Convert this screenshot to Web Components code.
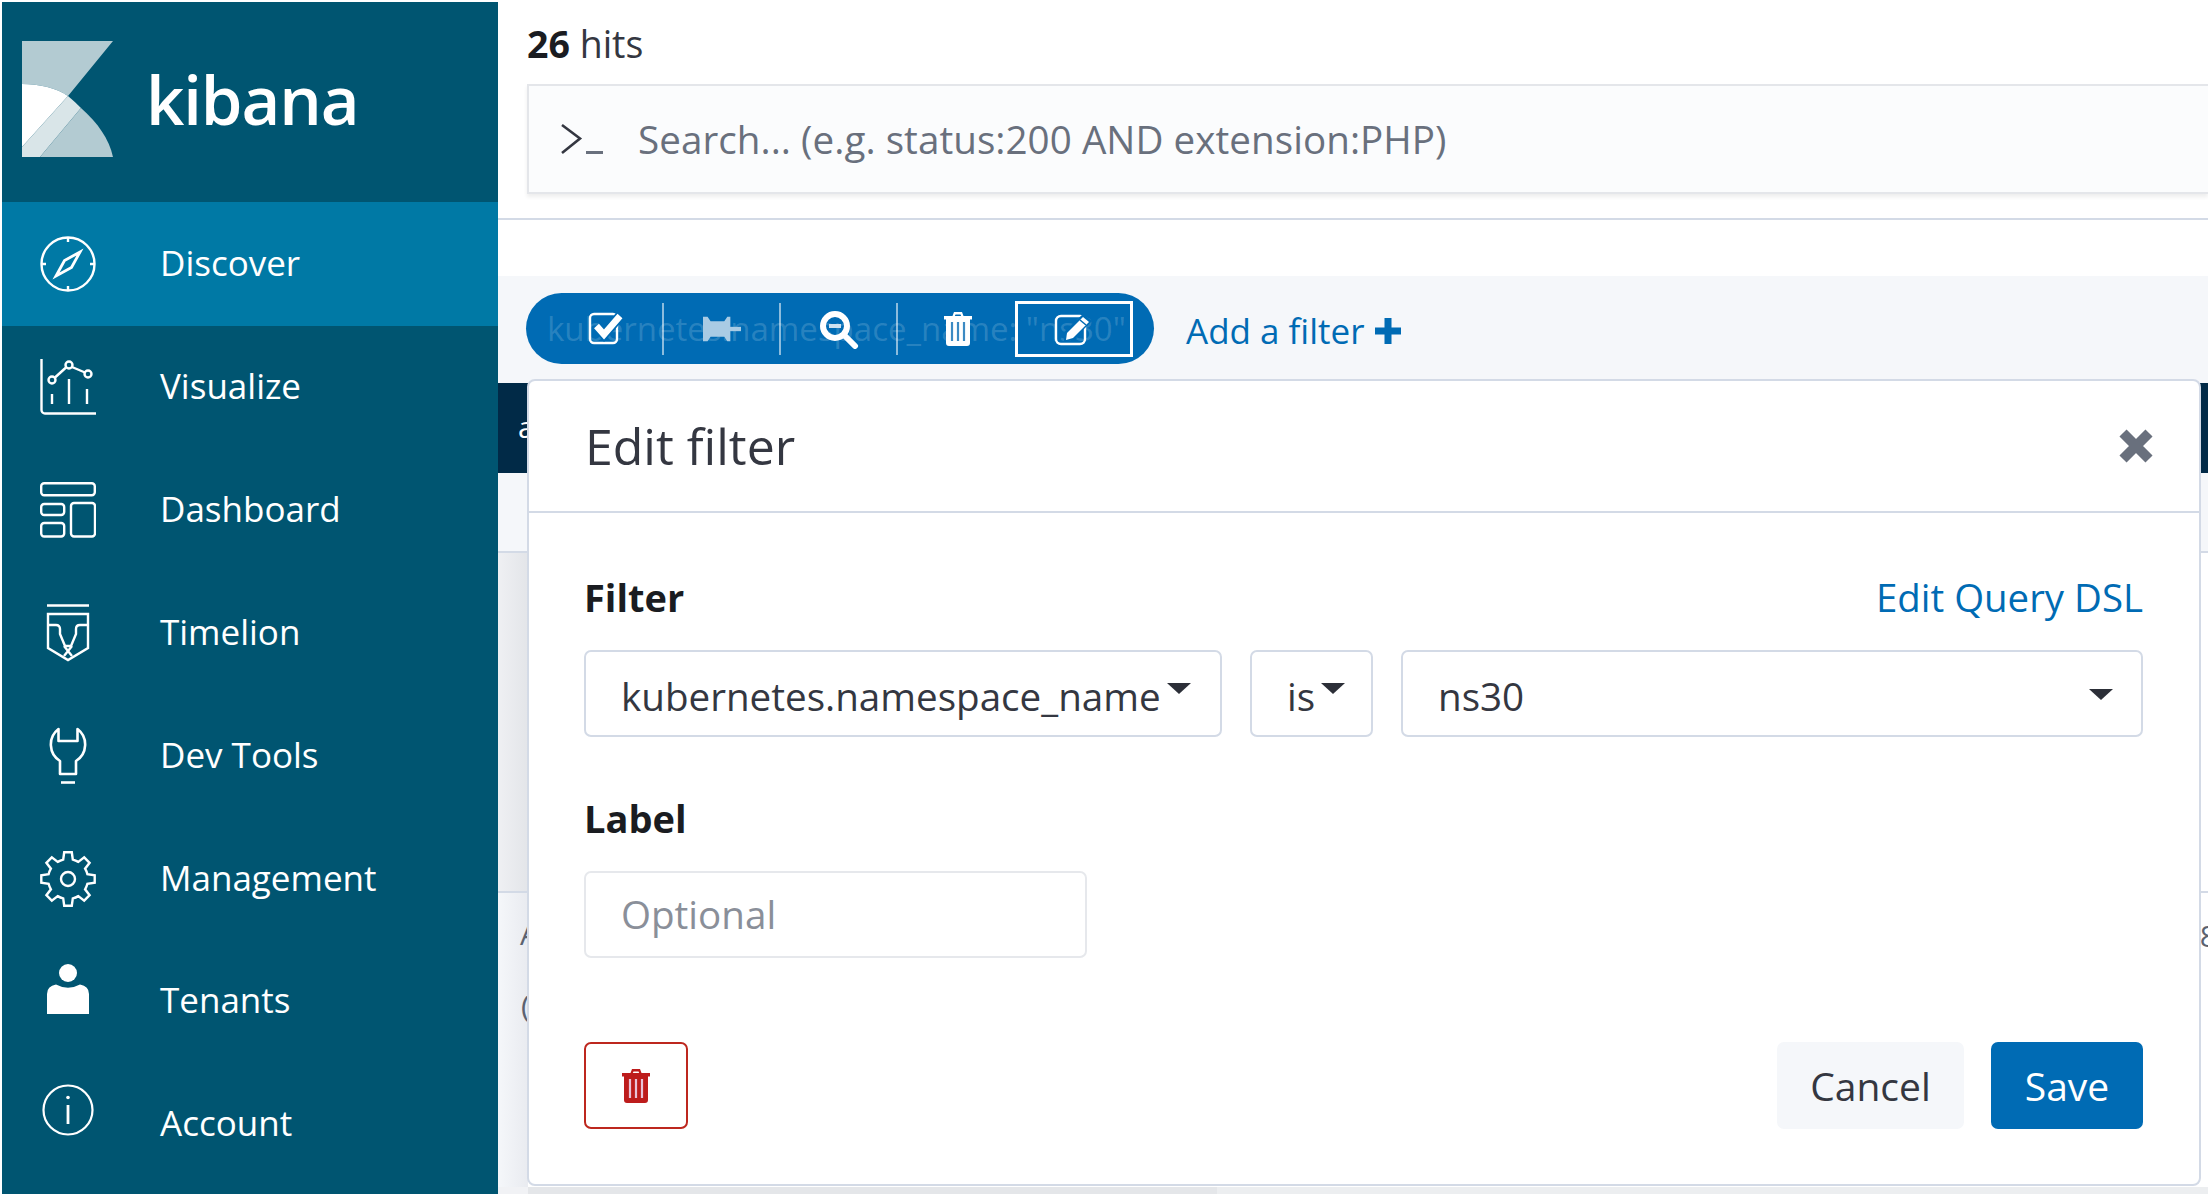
<!DOCTYPE html>
<html lang="en"><head><meta charset="utf-8"><title>Kibana</title>
<style>
html,body{margin:0;padding:0;height:1194px;overflow:hidden;background:#fff}
body{display:flex;font-family:"Open Sans","Noto Sans",sans-serif;color:#343741}
</style></head><body>
<kb-nav>
  <kb-nav-item icon="compass" active>Discover</kb-nav-item>
  <kb-nav-item icon="visualize">Visualize</kb-nav-item>
  <kb-nav-item icon="dashboard">Dashboard</kb-nav-item>
  <kb-nav-item icon="timelion">Timelion</kb-nav-item>
  <kb-nav-item icon="wrench">Dev Tools</kb-nav-item>
  <kb-nav-item icon="gear">Management</kb-nav-item>
  <kb-nav-item icon="tenant" shift="-12">Tenants</kb-nav-item>
  <kb-nav-item icon="info" shift="-14">Account</kb-nav-item>
</kb-nav>
<kb-main>
  <kb-filter-pill slot="pill">kubernetes.namespace_name: "ns30"</kb-filter-pill>
  <kb-modal slot="modal"></kb-modal>
</kb-main>
<script>
const gearPath=(()=>{let d='';const c=28,n=8,R=27,r=20;for(let i=0;i<n;i++){const a=i*2*Math.PI/n-Math.PI/2,s=Math.PI/n;
const p=(rad,ang)=>(c+rad*Math.cos(ang)).toFixed(1)+' '+(c+rad*Math.sin(ang)).toFixed(1);
d+=(i?'L':'M')+p(r,a-s*.62)+'L'+p(R,a-s*.36)+'L'+p(R,a+s*.36)+'L'+p(r,a+s*.62)+'A'+r+' '+r+' 0 0 1 '+p(r,a+s*1.38);}
return d+'Z';})();
const ICONS={
compass:`<svg width="56" height="56" viewBox="0 0 56 56" fill="none" stroke="#fff" stroke-width="2.4"><circle cx="28" cy="28" r="26.5"/><path d="M28 1.5V6M28 50v4.500M1.500 28H6M50 28h4.500"/><path d="M40 16L31.500 31.500 16 40 24.500 24.500Z" stroke-width="2.800"/></svg>`,
visualize:`<svg width="56" height="56" viewBox="0 0 56 56" fill="none" stroke="#fff" stroke-width="2.400"><path d="M1.500 0V51a3.500 3.500 0 0 0 3.500 3.500H56"/><circle cx="12" cy="21" r="3.500"/><circle cx="29" cy="6" r="3.500"/><circle cx="48" cy="15" r="3.500"/><path d="M15 18.500L26 8.500M32 8L45 13.500M29 20V45M47 30V45M12 35V45"/></svg>`,
dashboard:`<svg width="56" height="56" viewBox="0 0 56 56" fill="none" stroke="#fff" stroke-width="2.400"><rect x="1.200" y="1.200" width="53.600" height="12" rx="3"/><rect x="1.200" y="22" width="23" height="11" rx="3"/><rect x="1.200" y="41" width="23" height="13.500" rx="3"/><rect x="31" y="21" width="24" height="33.500" rx="3"/></svg>`,
timelion:`<svg width="44" height="58" viewBox="0 0 44 58" fill="none" stroke="#fff" stroke-width="2.400"><path d="M1 1.500H43M2 10H42V44L22 56 2 44Z"/><path d="M2 21H10Q14 21 14 25V30L19 42 25 42 30 30V25Q30 21 34 21H42"/><path d="M18 42L26 52M26 42L18 52"/></svg>`,
wrench:`<svg width="42" height="58" viewBox="0 0 42 58" fill="none" stroke="#fff" stroke-width="2.600" stroke-linejoin="round"><path d="M11.500 2A19.500 19.500 0 0 0 13 34V47H29V34A19.500 19.500 0 0 0 30.500 2V14H11.500Z"/><path d="M14 55.500H28"/></svg>`,
gear:`<svg width="56" height="56" viewBox="0 0 56 56" fill="none" stroke="#fff" stroke-width="2.400"><path d="${gearPath}"/><circle cx="28" cy="28" r="7"/></svg>`,
tenant:`<svg width="42" height="52" viewBox="0 0 42 52" fill="#fff"><circle cx="21" cy="10" r="9"/><path d="M0 51V31Q0 23 9 21.500Q21 28 33 21.500Q42 23 42 31V51Z"/></svg>`,
info:`<svg width="52" height="52" viewBox="0 0 52 52" fill="none" stroke="#fff" stroke-width="2.200"><circle cx="26" cy="26" r="24.500"/><path d="M26 21V40" stroke-width="2.800"/><circle cx="26" cy="13.500" r="1.800" fill="#fff" stroke="none"/></svg>`,
check:`<svg width="40" height="36" viewBox="0 0 40 36" fill="none"><rect x="3" y="3" width="27" height="29" rx="4" stroke="#fff" stroke-width="2.400"/><path d="M9.500 15L17 23.500 33 5" stroke="#006bb4" stroke-width="10"/><path d="M9.500 15L17 23.500 33 5" stroke="#fff" stroke-width="6.500"/></svg>`,
pin:`<svg width="38" height="26" viewBox="0 0 50 30" preserveAspectRatio="none" fill="#a9cbe4"><path d="M0 1h6l4 5h18l4-5h4v28h-4l-4-5H10l-4 5H0z"/><rect x="34" y="12.500" width="16" height="5"/></svg>`,
zoomout:`<svg width="40" height="40" viewBox="0 0 40 40" fill="none" stroke="#fff"><circle cx="16" cy="17" r="12" stroke-width="6"/><path d="M25 26L36 37" stroke-width="6" stroke-linecap="round"/><path d="M10 17H22" stroke="#cfe2f0" stroke-width="4"/></svg>`,
trash:`<svg width="30" height="36" viewBox="0 0 30 36"><path fill="currentColor" d="M1 5H9.500L11 1H19L20.500 5H29V8.500H27V32Q27 35 24 35H6Q3 35 3 32V8.500H1ZM12.500 3.500L11.800 5H18.200L17.500 3.500Z"/><path d="M9 11V30M15 11V30M21 11V30" stroke="var(--stripe,#3c8ac3)" stroke-width="2.200"/></svg>`,
edit:`<svg width="42" height="36" viewBox="0 0 42 36" fill="none"><rect x="3" y="5" width="29" height="28" rx="5" stroke="#fff" stroke-width="2.400"/><path d="M11 21L30 3 39 10 20 29 11 31Z" fill="#006bb4"/><path d="M14 22L30 6 36 11 20 27 13 29Z" fill="#fff"/><path d="M27 9L33 14" stroke="#006bb4" stroke-width="1.500"/></svg>`
};
class KbIcon extends HTMLElement{
  connectedCallback(){if(this.shadowRoot)return;const s=this.attachShadow({mode:'open'});
    s.innerHTML=`<style>:host{display:inline-flex;align-items:center;justify-content:center;flex:none}svg{display:block}</style>${ICONS[this.getAttribute('name')]||''}`;}
}
customElements.define('kb-icon',KbIcon);

class KbNav extends HTMLElement{
  constructor(){super();this.attachShadow({mode:'open'}).innerHTML=`<style>
  :host{display:flex;flex-direction:column;width:496px;height:1192px;margin:2px 0 0 2px;background:#005571;flex:none;color:#fff}
  header{height:200px;display:flex;align-items:center;flex:none;box-sizing:border-box;padding:0 0 0 20px}
  .mark{display:block;margin-top:-6px}
  .word{font:600 67px/1 "Open Sans",sans-serif;letter-spacing:-1.100px;margin:-6px 0 0 32px}
  </style>
  <header><svg class="mark" width="92" height="116" viewBox="0 0 92 116">
    <path fill="#b3cbd2" d="M0 0H91L46 55C35 47 17 43 0 43Z"/>
    <path fill="#fff" d="M0 43C17 43 35 47 46 55L0 106Z"/>
    <path fill="#d9e5e8" d="M0 106L46 55Q52 60 59 67L18 116H0Z"/>
    <path fill="#b3cbd2" d="M18 116L59 67C76 82 87 98 91 116Z"/>
  </svg><span class="word">kibana</span></header><slot></slot>`;}
}
customElements.define('kb-nav',KbNav);

class KbNavItem extends HTMLElement{
  connectedCallback(){if(this.shadowRoot)return;const s=this.attachShadow({mode:'open'});
    const shift=this.getAttribute('shift')||0;
    s.innerHTML=`<style>
    :host{display:flex;align-items:center;height:122.800px;flex:none;font:400 35px/1 "Open Sans",sans-serif;color:#fff}
    :host([active]){background:#0079a5;height:124px}
    .i{width:56px;height:56px;margin-left:38px;display:flex;align-items:center;justify-content:center;transform:translateY(${shift}px)}
    .t{margin-left:64px;margin-top:-3px}
    </style><div class="i"><kb-icon name="${this.getAttribute('icon')}"></kb-icon></div><span class="t"><slot></slot></span>`;}
}
customElements.define('kb-nav-item',KbNavItem);

class KbSearch extends HTMLElement{
  constructor(){super();this.attachShadow({mode:'open'}).innerHTML=`<style>
  :host{display:flex;align-items:center;height:110px;box-sizing:border-box;margin-left:29px;background:#fbfcfd;border:2px solid #e4e6ea;border-right:0;box-shadow:0 3px 4px rgba(0,0,0,.07);flex:none}
  svg{margin-left:31px;flex:none}
  span{margin-left:34px;font:400 38.600px/1 "Open Sans",sans-serif;letter-spacing:.05px;color:#69707d}
  </style><svg width="44" height="32" viewBox="0 0 44 32" fill="none"><path d="M2 2L20 15.500 2 30" stroke="#343741" stroke-width="2.600"/><path d="M26 29.500H43" stroke="#69707d" stroke-width="3"/></svg><span>Search... (e.g. status:200 AND extension:PHP)</span>`;}
}
customElements.define('kb-search',KbSearch);

class KbFilterPill extends HTMLElement{
  constructor(){super();this.attachShadow({mode:'open'}).innerHTML=`<style>
  :host{display:block;position:relative;width:628px;height:71px;flex:none;background:#006bb4;border-radius:36px;overflow:hidden}
  .label{position:absolute;left:21px;top:0;font:400 33px/71px "Open Sans",sans-serif;color:rgba(255,255,255,.17);white-space:nowrap}
  .acts{position:absolute;inset:0;display:grid;grid-template-columns:138px 117px 117px 117px 139px;align-items:center}
  .acts>div{display:flex;align-items:center;justify-content:center;height:52px;border-right:2px solid rgba(255,255,255,.55);box-sizing:border-box;color:#fff}
  .acts>div:nth-child(4){border-right:0}
  .acts>div.edit:nth-child(5){width:118px;height:56px;border:3px solid #fff;box-sizing:border-box}
  kb-icon[name=check]{margin-left:26px}
  kb-icon[name=trash]{margin-left:3px}
  </style><div class="label"><slot></slot></div>
  <div class="acts"><div><kb-icon name="check"></kb-icon></div><div><kb-icon name="pin"></kb-icon></div><div><kb-icon name="zoomout"></kb-icon></div><div><kb-icon name="trash"></kb-icon></div><div class="edit"><kb-icon name="edit"></kb-icon></div></div>`;}
}
customElements.define('kb-filter-pill',KbFilterPill);

class KbSelect extends HTMLElement{
  connectedCallback(){if(this.shadowRoot)return;const s=this.attachShadow({mode:'open'});
    const near=this.hasAttribute('near');
    s.innerHTML=`<style>
    :host{display:flex;align-items:center;height:87px;box-sizing:border-box;border:2px solid #d3dae6;border-radius:7px;background:#fff;padding:6px 0 0 35px;font:400 38.600px/1 "Open Sans",sans-serif;color:#343741;position:relative}
    :host([placeholder]){border-color:#e6e8ec;color:#8a8f99;padding-top:0}
    .c{width:0;height:0;border-left:12px solid transparent;border-right:12px solid transparent;border-top:11px solid #2c2f38;flex:none}
    .c.near{margin:-17px 0 0 6px}
    .c.far{position:absolute;right:28px;top:37px}
    </style><slot></slot>${this.hasAttribute('nocaret')?'':`<i class="c ${near?'near':'far'}"></i>`}`;}
}
customElements.define('kb-select',KbSelect);

class KbButton extends HTMLElement{
  constructor(){super();this.attachShadow({mode:'open'}).innerHTML=`<style>
  :host{display:flex;align-items:center;justify-content:center;height:87px;box-sizing:border-box;border-radius:7px;font:400 39px/1 "Open Sans",sans-serif;flex:none}
  :host([kind=danger]){width:104px;border:2px solid #bd271e;color:#bd1c1c;--stripe:#e9c3d8}
  :host([kind=ghost]){width:187px;background:#f5f7fa;color:#343741}
  :host([kind=primary]){width:152px;background:#006bb4;color:#fff}
  </style><slot></slot>`;}
}
customElements.define('kb-button',KbButton);

class KbModal extends HTMLElement{
  constructor(){super();this.attachShadow({mode:'open'}).innerHTML=`<style>
  :host{display:flex;flex-direction:column;position:absolute;left:29px;top:379px;width:1674px;height:807px;box-sizing:border-box;background:#fff;border:2px solid #d3dae6;border-radius:8px;z-index:2}
  header{height:132px;flex:none;box-sizing:border-box;border-bottom:2px solid #d3dae6;display:flex;align-items:center;justify-content:space-between;padding:0 45px 0 56px}
  h2{margin:0;font:400 50px/1 "Open Sans",sans-serif;color:#343741}
  .body{padding:0 56px 0 55px;display:flex;flex-direction:column;flex:1;font-family:"Open Sans",sans-serif}
  .lab{display:flex;justify-content:space-between;align-items:center;height:60px;font:700 38px/1 "Open Sans",sans-serif;color:#1a1c21}
  .lab a{font:400 38.400px/1 "Open Sans",sans-serif;color:#006bb4}
  .l1{margin-top:54px}
  .row{display:grid;grid-template-columns:638px 123px 1fr;gap:28px;margin-top:23px}
  .l2{margin-top:51px}
  .opt{width:503px;margin-top:23px}
  .foot{display:flex;align-items:center;margin-top:84px;gap:27px}
  .sp{flex:1}
  </style>
  <header><h2>Edit filter</h2><svg width="36" height="36" viewBox="0 0 36 36"><path d="M5 5L31 31M31 5L5 31" stroke="#69707d" stroke-width="10"/></svg></header>
  <div class="body">
    <div class="lab l1"><span>Filter</span><a>Edit Query DSL</a></div>
    <div class="row"><kb-select near>kubernetes.namespace_name</kb-select><kb-select near>is</kb-select><kb-select>ns30</kb-select></div>
    <div class="lab l2"><span>Label</span></div>
    <kb-select class="opt" placeholder nocaret>Optional</kb-select>
    <div class="foot"><kb-button kind="danger"><kb-icon name="trash"></kb-icon></kb-button><span class="sp"></span><kb-button kind="ghost">Cancel</kb-button><kb-button kind="primary">Save</kb-button></div>
  </div>`;}
}
customElements.define('kb-modal',KbModal);

class KbMain extends HTMLElement{
  constructor(){super();this.attachShadow({mode:'open'}).innerHTML=`<style>
  :host{display:flex;flex-direction:column;flex:1;min-width:0;height:1194px;position:relative;overflow:hidden;box-sizing:border-box;background:#fff}
  .hits{height:84px;flex:none;box-sizing:border-box;padding:26px 0 0 29px;font:400 37.500px/36px "Open Sans",sans-serif;color:#343741}
  .hits b{font-weight:700;color:#1a1c21}
  .gap1{height:24px;flex:none;border-bottom:2px solid #d3dae6}
  .gap2{height:56px;flex:none}
  .band{height:107px;flex:none;box-sizing:border-box;background:#f5f7fa;display:flex;padding:17px 0 0 28px}
  .add{margin:2px 0 0 32px;height:71px;display:flex;align-items:center;font:400 35px/1 "Open Sans",sans-serif;color:#006bb4}
  .add svg{margin-left:10px}
  .dark{height:90px;flex:none;background:#012a47;color:#fff;font:400 30px/88px "Open Sans",sans-serif;padding-left:20px}
  .tab{height:80px;flex:none;background:#f5f7fa;border-bottom:2px solid #d3dae6;box-sizing:border-box}
  .chart{height:340px;flex:none;background:linear-gradient(90deg,#eff0f3,#e3e5e9 30px,#fff 30px);border-bottom:2px solid #d3dae6;box-sizing:border-box;position:relative}
  .rows{flex:1;position:relative;background:linear-gradient(90deg,#f5f7fa,#e9ebf0 30px,#fff 30px)}
  .frag{position:absolute;font:400 30px/1 "Open Sans",sans-serif;color:#5b6270}
  .floor{position:absolute;left:0;right:0;top:1187px;height:7px;background:linear-gradient(90deg,#f1f2f5 30px,#e4e6e9 30px,#e4e6e9 719px,#eceef0 719px)}
  </style>
  <div class="hits"><b>26</b> hits</div>
  <kb-search></kb-search>
  <div class="gap1"></div><div class="gap2"></div>
  <div class="band"><slot name="pill"></slot><span class="add">Add a filter<svg width="28" height="28" viewBox="0 0 28 28"><path d="M14 1V27M1 14H27" stroke="#006bb4" stroke-width="7"/></svg></span></div>
  <div class="dark">a</div>
  <div class="tab"></div>
  <div class="chart"></div>
  <div class="rows"><span class="frag" style="left:22px;top:26px">A</span><span class="frag" style="left:23px;top:98px">(</span><span class="frag" style="right:-9px;top:28px">8</span></div>
  <div class="floor"></div>
  <slot name="modal"></slot>`;}
}
customElements.define('kb-main',KbMain);
</script>
</body></html>
